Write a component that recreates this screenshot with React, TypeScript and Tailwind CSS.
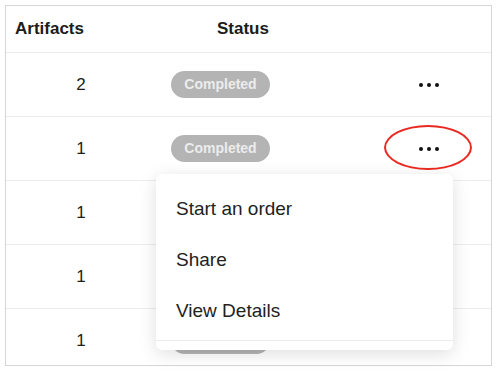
const rows = [2, 1, 1, 1, 1];

function Dots() {
  return (
    <div className="flex items-center gap-[4px]">
      <span className="w-[4px] h-[4px] rounded-full bg-[#111]" />
      <span className="w-[4px] h-[4px] rounded-full bg-[#111]" />
      <span className="w-[4px] h-[4px] rounded-full bg-[#111]" />
    </div>
  );
}

export default function App() {
  return (
    <div
      className="relative w-[498px] h-[373px] bg-white p-[5px] overflow-hidden"
      style={{ fontFamily: '"Liberation Sans", Arial, sans-serif' }}
    >
      <div className="w-[487px] h-[361px] border border-[#d6d6d6] overflow-hidden">
        {/* header */}
        <div className="flex items-center h-[47px] border-b border-[#ececec] text-[17px] font-bold text-[#1c1c1c]">
          <div className="w-[150px] pl-[9px]">Artifacts</div>
          <div className="w-[210px] pl-[61px]">Status</div>
          <div className="flex-1" />
        </div>

        {rows.map((count, i) => (
          <div
            key={i}
            className="flex items-center h-[64px] border-b border-[#ececec] shrink-0"
          >
            <div className="w-[150px] text-center text-[17px] text-[#1c1c1c]">{count}</div>
            <div className="w-[210px] pl-[15px]">
              <span className="inline-flex items-center justify-center w-[99px] h-[27px] rounded-full bg-[#b4b4b4] text-[#ececec] text-[14px] font-bold">
                Completed
              </span>
            </div>
            <div className="flex-1 flex justify-center">
              {i < 2 && <Dots />}
            </div>
          </div>
        ))}
      </div>

      {/* annotation around the active menu trigger */}
      <div className="absolute left-[384px] top-[125px] w-[88px] h-[45px] rounded-[50%] border-2 border-[#ea2a22]" />

      {/* dropdown menu */}
      <div className="absolute left-[156px] top-[174px] w-[297px] bg-white rounded-[6px] shadow-[0_4px_18px_rgba(0,0,0,0.13)] pt-[10px]">
        {["Start an order", "Share", "View Details"].map((label) => (
          <div
            key={label}
            className="h-[51px] flex items-center pl-[20px] text-[19px] text-[#222]"
          >
            {label}
          </div>
        ))}
        <div className="mt-[3px] border-t border-[#ececec] h-[10px]" />
      </div>
    </div>
  );
}
